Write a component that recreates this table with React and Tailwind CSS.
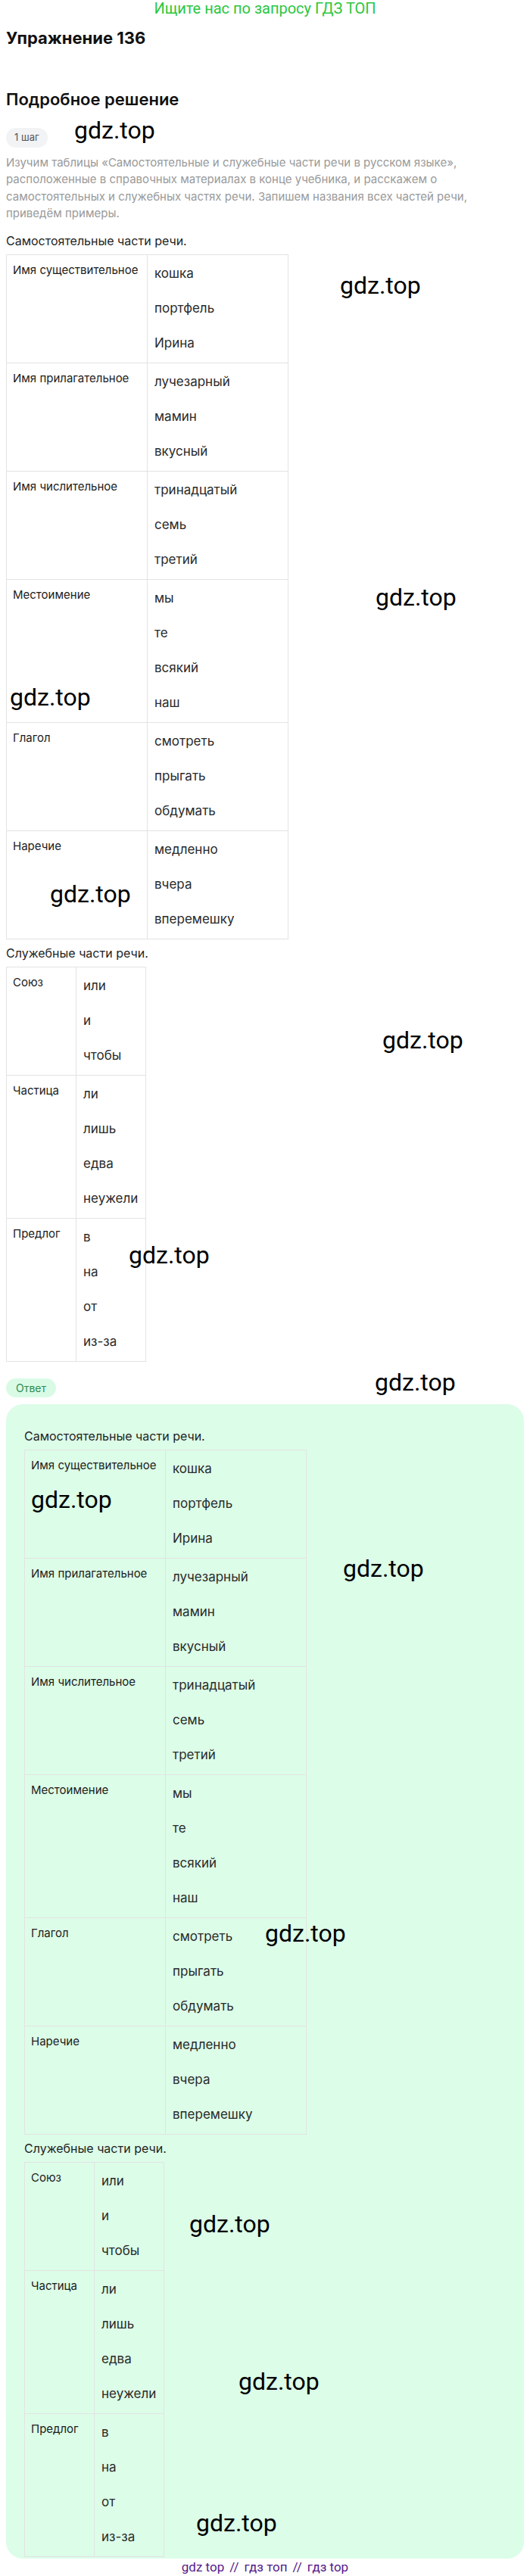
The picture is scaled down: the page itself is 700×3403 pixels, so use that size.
import React from "react";

const mainParts = [
  ["Имя существительное", ["кошка", "портфель", "Ирина"]],
  ["Имя прилагательное", ["лучезарный", "мамин", "вкусный"]],
  ["Имя числительное", ["тринадцатый", "семь", "третий"]],
  ["Местоимение", ["мы", "те", "всякий", "наш"]],
  ["Глагол", ["смотреть", "прыгать", "обдумать"]],
  ["Наречие", ["медленно", "вчера", "вперемешку"]],
];

const serviceParts = [
  ["Союз", ["или", "и", "чтобы"]],
  ["Частица", ["ли", "лишь", "едва", "неужели"]],
  ["Предлог", ["в", "на", "от", "из-за"]],
];

// watermark spots: [left, top]
const marks = [
  [98, 153],
  [449, 358],
  [496, 770],
  [13, 902],
  [66, 1162],
  [505, 1355],
  [170, 1639],
  [495, 1807],
  [41, 1962],
  [453, 2053],
  [350, 2535],
  [250, 2919],
  [315, 3127],
  [259, 3314],
];

const PartsTable = ({ rows, wide }) => (
  <table className="border-collapse">
    <tbody>
      {rows.map(([label, words]) => (
        <tr key={label}>
          <td
            className={`${wide ? "w-[186px]" : "w-[92px]"} border border-[#e3e3e3] align-top pl-2 pr-1 pt-[10px] text-[15px] leading-[20px] text-[#1c1c1c] whitespace-nowrap`}
          >
            {label}
          </td>
          <td
            className={`${wide ? "w-[186px]" : "w-[92px]"} border border-[#e3e3e3] align-top pl-[9px] py-[2px] text-[17px] text-[#2a2a2a]`}
          >
            {words.map((w) => (
              <div key={w} className="h-[46px] flex items-center">
                {w}
              </div>
            ))}
          </td>
        </tr>
      ))}
    </tbody>
  </table>
);

const Solution = () => (
  <>
    <p className="text-[16px] leading-[24px] text-[#1f1f1f]">Самостоятельные части речи.</p>
    <div className="mt-[6px]">
      <PartsTable rows={mainParts} wide />
    </div>
    <p className="mt-[6px] text-[16px] leading-[24px] text-[#1f1f1f]">Служебные части речи.</p>
    <div className="mt-[6px]">
      <PartsTable rows={serviceParts} />
    </div>
  </>
);

export default function App() {
  return (
    <div className="relative w-[700px] h-[3403px] bg-white font-['Inter','Noto_Sans',sans-serif] overflow-hidden">
      <div className="px-2">
        <div className="h-[22px] text-center font-['Roboto',sans-serif] text-[20px] leading-[22px] text-[#2cc73f]">
          Ищите нас по запросу ГДЗ ТОП
        </div>

        <h1 className="mt-[14px] text-[22px] leading-[28px] font-bold text-[#111]">Упражнение 136</h1>

        <h2 className="mt-[53px] text-[22px] leading-[28px] font-semibold text-[#111]">Подробное решение</h2>

        <div className="mt-[24px] inline-flex h-[26px] items-center rounded-full bg-[#f2f3f5] px-[11px] text-[13px] text-[#555]">
          1 шаг
        </div>

        <p className="mt-[9px] text-[15px] leading-[22.3px] text-[#9a9a9a]">
          Изучим таблицы «Самостоятельные и служебные части речи в русском языке», расположенные в справочных
          материалах в конце учебника, и расскажем о самостоятельных и служебных частях речи. Запишем названия всех
          частей речи, приведём примеры.
        </p>

        <div className="mt-[13px]">
          <Solution />
        </div>

        <div className="mt-[22px] inline-flex h-[25px] items-center rounded-full bg-[#d9fbe6] px-[13px] text-[14px] text-[#2f8a4f]">
          Ответ
        </div>

        <div className="mt-[9px] rounded-[22px] bg-[#dcfde8] px-6 pt-[30px] pb-[2px]">
          <Solution />
        </div>

        <div className="h-[24px] flex items-center justify-center gap-[7px] font-['Roboto',sans-serif] text-[17px] text-[#551a8b]">
          <span>gdz top</span>
          <span>//</span>
          <span>гдз топ</span>
          <span>//</span>
          <span>гдз top</span>
        </div>
      </div>

      {marks.map(([x, y], i) => (
        <div
          key={i}
          className="absolute font-['Roboto',sans-serif] text-[32px] leading-[38px] text-black pointer-events-none"
          style={{ left: x, top: y }}
        >
          gdz.top
        </div>
      ))}
    </div>
  );
}
